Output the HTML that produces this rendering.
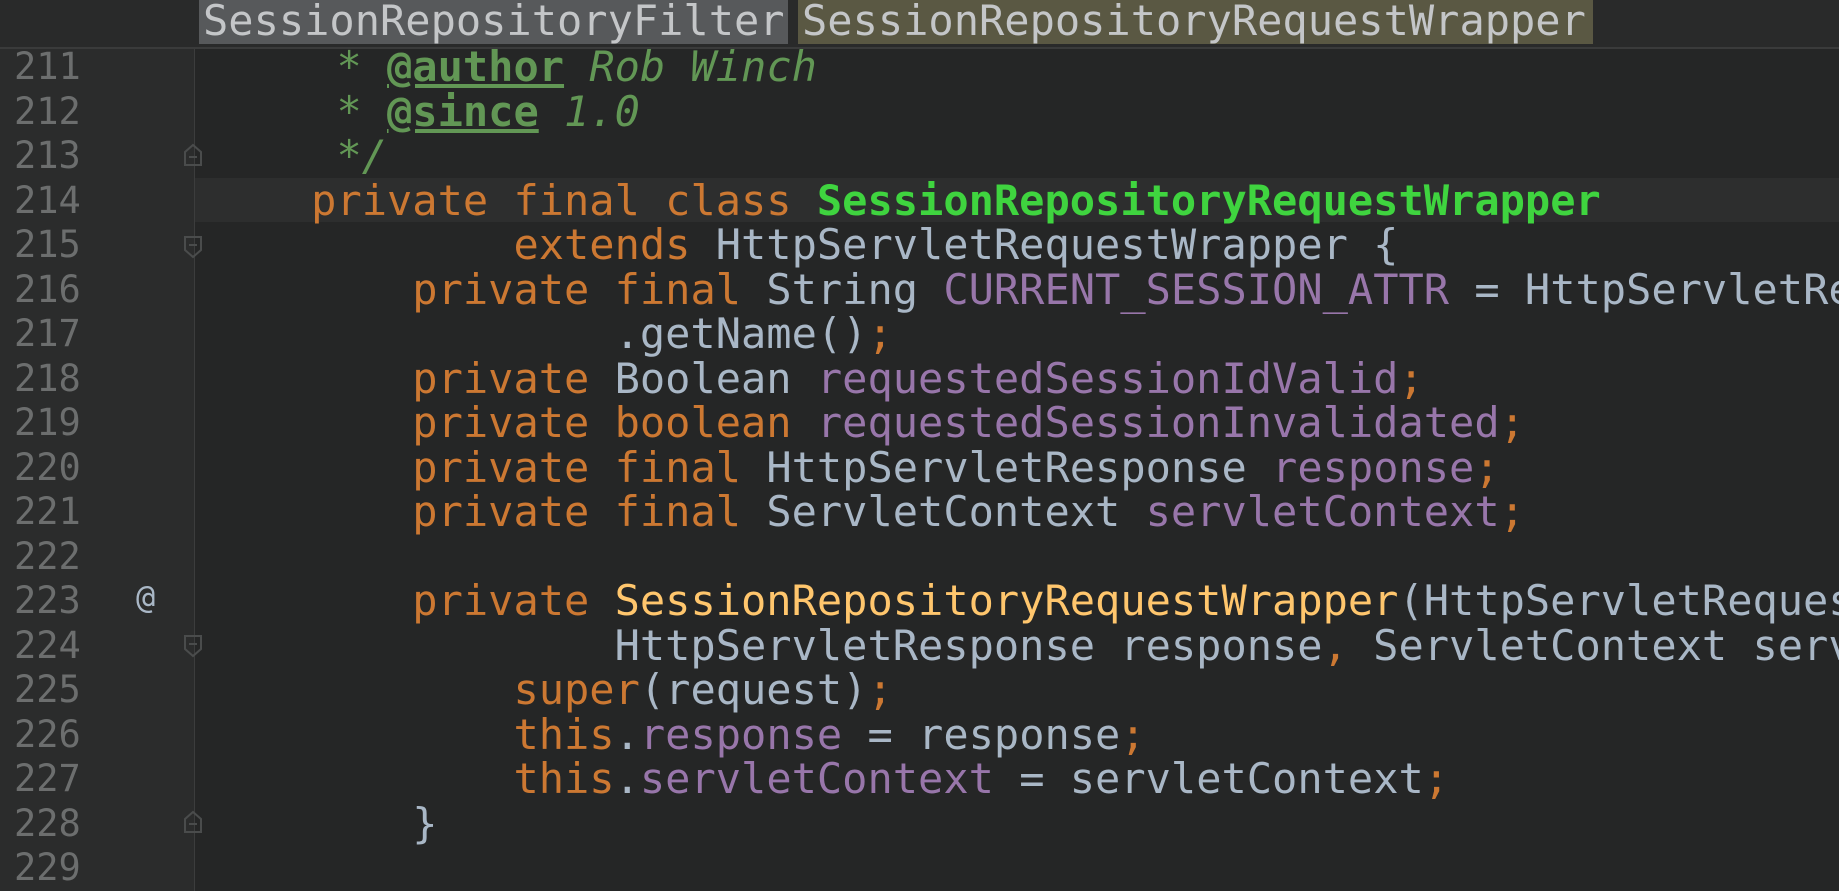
<!DOCTYPE html>
<html><head><meta charset="utf-8"><style>
html,body{margin:0;padding:0;width:1839px;height:891px;overflow:hidden;background:#252626;}
.hdr{position:absolute;left:0;top:0;width:1839px;height:47px;background:#292a2a;border-bottom:2px solid #3a3b3b;}
.tab{position:absolute;top:0;height:44px;font:42px/42px "DejaVu Sans Mono","Liberation Mono",monospace;color:#c4c6c8;letter-spacing:0;white-space:pre;padding-left:4px;box-sizing:border-box;overflow:hidden;}
.gut{position:absolute;left:0;top:49px;width:194px;height:842px;background:#2b2c2c;border-right:1px solid #3c3d3d;}
.ln{position:absolute;left:14px;width:80px;font:37px/44.5px "DejaVu Sans Mono",monospace;color:#6c6e6e;}
.code{position:absolute;left:210px;top:45px;width:1629px;height:846px;overflow:hidden;}
pre{margin:0;font:42px/44.5px "DejaVu Sans Mono","Liberation Mono",monospace;color:#a9b7c6;letter-spacing:0;}
.k{color:#cc7832}.f{color:#9876aa}.m{color:#ffc66d}.c{color:#629755;font-style:italic}.t{color:#629755;font-weight:bold;text-decoration:underline}.g{color:#3fd43f;font-weight:bold}
.cur{position:absolute;left:195px;top:178px;width:1644px;height:44px;background:#2d2e2e;}
.fold{position:absolute;left:183px;width:20px;height:24px;}
</style></head><body>
<div class="hdr">
<div class="tab" style="left:199px;width:589px;background:#57595b;">SessionRepositoryFilter</div>
<div class="tab" style="left:798px;width:795px;background:#5a5843;">SessionRepositoryRequestWrapper</div>
</div>
<div class="gut"></div>
<div class="cur"></div>
<div class="ln" style="top:45px">211<br>212<br>213<br>214<br>215<br>216<br>217<br>218<br>219<br>220<br>221<br>222<br>223<br>224<br>225<br>226<br>227<br>228<br>229</div>
<div style="position:absolute;left:136px;top:578px;font:32px 'DejaVu Sans Mono',monospace;color:#a9b7c6">@</div>
<svg class="fold" style="top:143px" viewBox="0 0 20 24"><path d="M2 22V9L10 2L18 9V22Z M6 14H14" fill="none" stroke="#4a4c4c" stroke-width="2"/></svg>
<svg class="fold" style="top:235px" viewBox="0 0 20 24"><path d="M2 2V15L10 22L18 15V2Z M6 10H14" fill="none" stroke="#4a4c4c" stroke-width="2"/></svg>
<svg class="fold" style="top:634px" viewBox="0 0 20 24"><path d="M2 2V15L10 22L18 15V2Z M6 10H14" fill="none" stroke="#4a4c4c" stroke-width="2"/></svg>
<svg class="fold" style="top:810px" viewBox="0 0 20 24"><path d="M2 22V9L10 2L18 9V22Z M6 14H14" fill="none" stroke="#4a4c4c" stroke-width="2"/></svg>
<div class="code"><pre>     <span class="c">* </span><span class="t">@author</span><span class="c"> Rob Winch</span>
     <span class="c">* </span><span class="t">@since</span><span class="c"> 1.0</span>
     <span class="c">*/</span>
    <span class="k">private final class </span><span class="g">SessionRepositoryRequestWrapper</span>
            <span class="k">extends </span>HttpServletRequestWrapper {
        <span class="k">private final </span>String <span class="f">CURRENT_SESSION_ATTR</span> = HttpServletRequestWrapper.class
                .getName()<span class="k">;</span>
        <span class="k">private </span>Boolean <span class="f">requestedSessionIdValid</span><span class="k">;</span>
        <span class="k">private boolean </span><span class="f">requestedSessionInvalidated</span><span class="k">;</span>
        <span class="k">private final </span>HttpServletResponse <span class="f">response</span><span class="k">;</span>
        <span class="k">private final </span>ServletContext <span class="f">servletContext</span><span class="k">;</span>

        <span class="k">private </span><span class="m">SessionRepositoryRequestWrapper</span>(HttpServletRequest request<span class="k">,</span>
                HttpServletResponse response<span class="k">, </span>ServletContext servletContext) {
            <span class="k">super</span>(request)<span class="k">;</span>
            <span class="k">this</span>.<span class="f">response</span> = response<span class="k">;</span>
            <span class="k">this</span>.<span class="f">servletContext</span> = servletContext<span class="k">;</span>
        }

</pre></div>
</body></html>
